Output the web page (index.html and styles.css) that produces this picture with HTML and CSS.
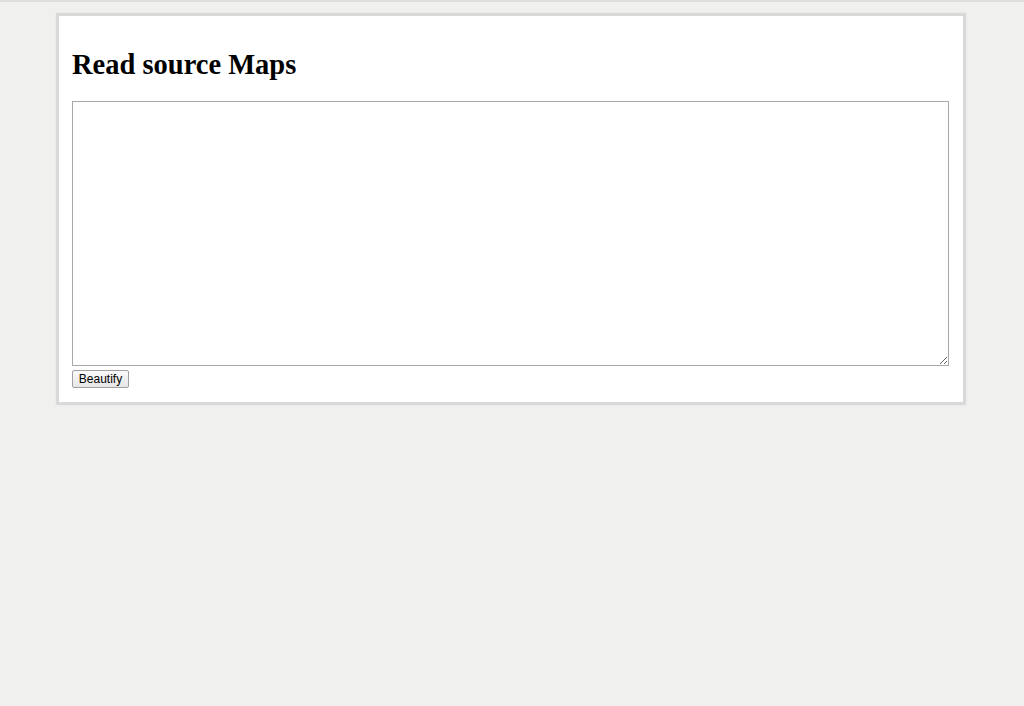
FILE: index.html
```html
<!DOCTYPE html>
<html>
<head>
<meta charset="utf-8">
<title>Read source Maps</title>
<link rel="stylesheet" href="styles.css">
</head>
<body>
<div class="card">
  <h1 class="title">Read source Maps</h1>
  <textarea class="source"></textarea>
  <button class="btn">Beautify</button>
</div>
</body>
</html>
```
FILE: styles.css
```css
html, body {
  margin: 0;
  padding: 0;
}
body {
  background: #f0f0ee;
  border-top: 2px solid #dedede;
  padding-top: 11px;
  min-height: 693px;
  font-family: "Liberation Serif", serif;
}
.card {
  margin-left: 56px;
  width: 877px;
  background: #fff;
  border: 3px solid #d9d9d9;
  padding: 9px 14px 14px 13px;
  box-shadow: 0 0 2px #e4e4e4;
}
.title {
  font-family: "Liberation Serif", serif;
  font-size: 28.5px;
  font-weight: bold;
  color: #000;
  margin: 21px 0 18px;
  line-height: 37px;
}
.source {
  display: block;
  box-sizing: border-box;
  width: 877px;
  height: 265px;
  border: 1px solid #a9a9a9;
  margin: 0 0 4px;
  padding: 2px;
  background: #fff;
}
.btn {
  display: block;
  box-sizing: border-box;
  height: 18px;
  width: 57px;
  padding: 0;
  font-family: "Liberation Sans", Arial, sans-serif;
  font-size: 12px;
  line-height: 16px;
  color: #000;
  background: linear-gradient(#fafafa, #e6e6e6);
  border: 1px solid #a0a0a0;
  border-radius: 2px;
}
```
